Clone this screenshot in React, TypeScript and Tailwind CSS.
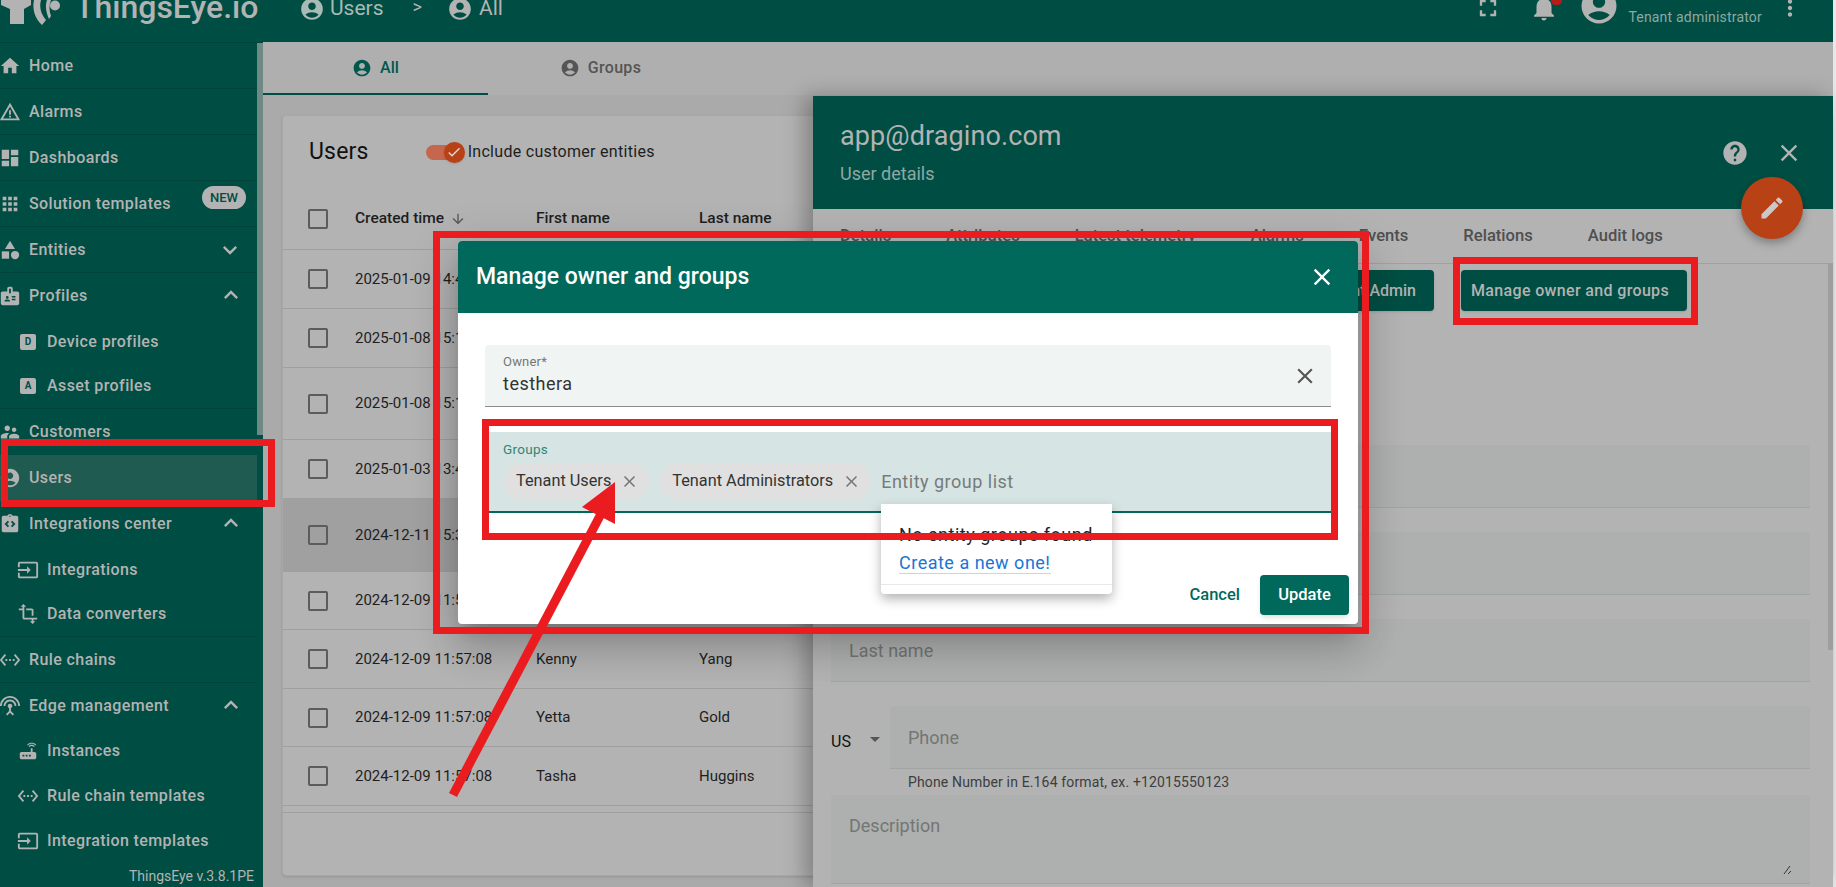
import React from "react";
import {
  MdHome, MdWarningAmber, MdDashboard, MdApps, MdCategory, MdBadge, MdSupervisorAccount, MdAccountCircle,
  MdIntegrationInstructions, MdInput, MdTransform, MdSettingsEthernet, MdSettingsInputAntenna, MdRouter,
  MdKeyboardArrowDown, MdKeyboardArrowUp, MdFullscreen, MdNotifications, MdMoreVert, MdHelp, MdClose, MdEdit,
  MdArrowDownward, MdCheck, MdArrowDropDown,
} from "react-icons/md";

type NavItem = {
  label: string;
  icon?: React.ComponentType<{ size?: number; className?: string }>;
  letter?: string;
  sub?: boolean;
  chevron?: "up" | "down";
  line?: boolean;
  active?: boolean;
  badge?: boolean;
  tight?: boolean;
};

const nav: NavItem[] = [
  { label: "Home", icon: MdHome, line: true },
  { label: "Alarms", icon: MdWarningAmber, line: true },
  { label: "Dashboards", icon: MdDashboard, line: true },
  { label: "Solution templates", icon: MdApps, line: true, badge: true },
  { label: "Entities", icon: MdCategory, line: true, chevron: "down" },
  { label: "Profiles", icon: MdBadge, chevron: "up" },
  { label: "Device profiles", letter: "D", sub: true },
  { label: "Asset profiles", letter: "A", sub: true, line: true },
  { label: "Customers", icon: MdSupervisorAccount },
  { label: "Users", icon: MdAccountCircle, active: true },
  { label: "Integrations center", icon: MdIntegrationInstructions, chevron: "up" },
  { label: "Integrations", icon: MdInput, sub: true },
  { label: "Data converters", icon: MdTransform, sub: true, line: true },
  { label: "Rule chains", icon: MdSettingsEthernet, line: true },
  { label: "Edge management", icon: MdSettingsInputAntenna, chevron: "up", tight: true },
  { label: "Instances", icon: MdRouter, sub: true },
  { label: "Rule chain templates", icon: MdSettingsEthernet, sub: true },
  { label: "Integration templates", icon: MdInput, sub: true },
];

const rows = [
  { h: "h-[59px]", date: "2025-01-09 14:45:10" },
  { h: "h-[59px]", date: "2025-01-08 15:12:33" },
  { h: "h-[72px]", date: "2025-01-08 15:10:21" },
  { h: "h-[59px]", date: "2025-01-03 13:41:52" },
  { h: "h-[73px]", date: "2024-12-11 15:30:44", selected: true },
  { h: "h-[58px]", date: "2024-12-09 11:57:08" },
  { h: "h-[59px]", date: "2024-12-09 11:57:08", first: "Kenny", last: "Yang" },
  { h: "h-[58px]", date: "2024-12-09 11:57:08", first: "Yetta", last: "Gold" },
  { h: "h-[59px]", date: "2024-12-09 11:57:08", first: "Tasha", last: "Huggins" },
];

function SideRow({ item }: { item: NavItem }) {
  const Icon = item.icon;
  return (
    <div
      className={`relative flex items-center shrink-0 ${item.sub ? "h-[45px] pl-[18px]" : item.tight ? "h-[45px]" : "h-[46px]"} ${item.line ? "border-b border-[#004238]" : ""} ${item.active ? "bg-[#1f5b51]" : ""}`}
    >
      <div className="w-[20px] flex justify-center shrink-0 mr-[9px]">
        {Icon ? (
          <Icon size={22} className="shrink-0 text-[#b3b3b3]" />
        ) : (
          <div className="w-[16px] h-[16px] rounded-[2px] bg-[#b3b3b3] flex items-center justify-center text-[10px] font-bold leading-none text-[#004e43]">
            {item.letter}
          </div>
        )}
      </div>
      <span className="text-[16px] font-medium tracking-[0.4px] text-[#b3b3b3] whitespace-nowrap">{item.label}</span>
      {item.badge && (
        <span className="absolute left-[202px] top-[5px] h-[23px] w-[44px] rounded-full bg-[#b3b3b3] text-[#004e43] text-[13px] font-medium flex items-center justify-center">
          NEW
        </span>
      )}
      {item.chevron === "down" && <MdKeyboardArrowDown size={28} className="absolute left-[216px] text-[#b3b3b3]" />}
      {item.chevron === "up" && <MdKeyboardArrowUp size={28} className="absolute left-[217px] -mt-[2px] text-[#b3b3b3]" />}
    </div>
  );
}

function Sidebar() {
  return (
    <aside className="w-[263px] shrink-0 h-full bg-[#004e43] flex flex-col relative">
      <div className="h-[43px] shrink-0 border-b border-[#004238] overflow-hidden flex items-start">
        <svg width="62" height="27" viewBox="0 0 62 27" className="shrink-0 ml-[1px]">
          <path d="M0 0H30V5L23 9V24H9V9L0 5Z" fill="#b3b3b3" />
          <path d="M33 0C31 9 34 19 41 25L45 20C40 14 38 7 40 0Z" fill="#b3b3b3" />
          <path d="M46 0C44 6 45 12 48 19L50 16C48 11 48 5 50 0Z" fill="#b3b3b3" />
          <circle cx="54" cy="5.5" r="5" fill="#b3b3b3" />
        </svg>
        <span className="ml-[12px] -mt-[12px] text-[32px] leading-[38px] font-medium text-[#b3b3b3] whitespace-nowrap">ThingsEye.io</span>
      </div>
      <div className="flex flex-1 min-h-0">
        <div className="w-[257px] flex flex-col shrink-0">
          {nav.map((n) => (
            <SideRow key={n.label} item={n} />
          ))}
          <div className="mt-[3px] pr-[3px] text-right text-[14px] text-[#b3b3b3]">ThingsEye v.3.8.1PE</div>
        </div>
        <div className="w-[6px] h-[392px] bg-[#6f8a84]" />
      </div>
    </aside>
  );
}

function TopBar() {
  return (
    <header className="h-[42px] shrink-0 bg-[#004e43] overflow-hidden">
      <div className="h-[17px] flex items-center text-[#b3b3b3]">
        <MdAccountCircle size={26} className="ml-[36px] shrink-0 text-[#a8bbb7]" />
        <span className="ml-[5px] text-[21px] text-[#a8bbb7]">Users</span>
        <span className="ml-[29px] -mt-[4px] text-[18px]">&gt;</span>
        <MdAccountCircle size={26} className="ml-[25px] shrink-0" />
        <span className="ml-[6px] text-[21px]">All</span>
        <MdFullscreen size={28} className="ml-auto shrink-0 -translate-y-[1px]" />
        <div className="relative ml-[27px] shrink-0 -translate-y-[1px]">
          <MdNotifications size={30} />
          <div className="absolute top-[3px] left-[22px] w-[11px] h-[9px] rounded-full bg-[#b71c1c]" />
        </div>
        <MdAccountCircle size={42} className="ml-[19px] shrink-0 -translate-y-[3px]" />
        <span className="ml-[8px] translate-y-[9px] text-[14px] tracking-[0.2px] text-[#8fa8a3] whitespace-nowrap">Tenant administrator</span>
        <MdMoreVert size={26} className="ml-[15px] mr-[30px] shrink-0 -translate-y-[1px]" />
      </div>
    </header>
  );
}

function TabsBar() {
  return (
    <div className="h-[53px] shrink-0 bg-[#afafaf] flex">
      <div className="w-[225px] border-b-[2px] border-[#004e43] flex items-center justify-center gap-[8px] text-[#00584d] text-[16px] font-medium pt-[1px]">
        <MdAccountCircle size={20} />
        <span>All</span>
      </div>
      <div className="w-[225px] flex items-center justify-center gap-[8px] text-[#555] text-[16px] font-medium tracking-[0.3px] pb-[1px]">
        <MdAccountCircle size={20} />
        <span>Groups</span>
      </div>
    </div>
  );
}

function Check() {
  return <div className="w-[20px] h-[20px] shrink-0 border-2 border-[#5c5c5c] rounded-[2px]" />;
}

function UsersCard() {
  return (
    <section className="ml-[19px] mt-[20px] h-[761px] bg-[#b3b3b3] rounded-[4px] border border-[#a8a8a8] flex flex-col text-[#1e1e1e] shadow-sm">
      <div className="h-[72px] shrink-0 flex items-center pl-[26px]">
        <h1 className="text-[23px] tracking-[0.2px] text-[#111]">Users</h1>
        <div className="relative ml-[57px] w-[32px] h-[15px] rounded-full bg-[#c4674d] shrink-0">
          <div className="absolute -right-[7px] -top-[3px] w-[21px] h-[21px] rounded-full bg-[#b84115] flex items-center justify-center text-[#dcdcdc] shadow">
            <MdCheck size={16} />
          </div>
        </div>
        <span className="ml-[10px] text-[16px] tracking-[0.3px]">Include customer entities</span>
      </div>
      <div className="h-[62px] shrink-0 flex items-center pl-[25px] pt-[1px] border-b border-[#9f9f9f] text-[15.5px] font-medium">
        <Check />
        <span className="ml-[27px] w-[181px] flex items-center gap-[6px] whitespace-nowrap">
          Created time <MdArrowDownward size={16} className="text-[#555]" />
        </span>
        <span className="w-[163px]">First name</span>
        <span>Last name</span>
      </div>
      {rows.map((r, i) => (
        <div key={i} className={`${r.h} shrink-0 flex items-center pl-[25px] border-b border-[#9f9f9f] text-[15px] ${r.selected ? "bg-[#a0a0a0]" : ""}`}>
          <Check />
          <span className="ml-[27px] w-[181px] whitespace-nowrap">{r.date}</span>
          <span className="w-[163px]">{r.first}</span>
          <span>{r.last}</span>
        </div>
      ))}
      <div className="h-[7px] shrink-0 border-b border-[#9f9f9f]" />
    </section>
  );
}

function DrawerField({ label, h = "h-[63px]", className = "" }: { label: string; h?: string; className?: string }) {
  return (
    <div className={`${h} bg-[#aeb0af] rounded-t-[4px] border-b border-[#a0a5a3] px-[18px] pt-[19px] text-[18px] leading-[26px] text-[#737673] ${className}`}>
      {label}
    </div>
  );
}

function Drawer() {
  return (
    <aside className="absolute left-[813px] top-[96px] w-[1020px] h-[791px] bg-[#b3b3b3] flex flex-col shadow-[-8px_0_20px_rgba(0,0,0,0.28)]">
      <div className="h-[113px] shrink-0 bg-[#004e43] pl-[27px] pt-[22px] flex justify-between text-[#b3b3b3]">
        <div>
          <div className="text-[27px] leading-[36px] tracking-[0.1px]">app@dragino.com</div>
          <div className="mt-[8px] text-[18px] leading-[24px] text-[#8fa8a3]">User details</div>
        </div>
        <div className="flex items-center gap-[26px] h-[70px] pr-[30px]">
          <MdHelp size={28} />
          <MdClose size={28} />
        </div>
      </div>
      <div className="absolute left-[928px] top-[81px] w-[62px] h-[62px] rounded-full bg-[#b84115] flex items-center justify-center text-[#c9c9c9] shadow-[0_4px_10px_rgba(0,0,0,0.3)]">
        <MdEdit size={28} />
      </div>
      <nav className="h-[55px] shrink-0 border-b border-[#a1a1a1] flex items-center pl-[27px] gap-[55px] text-[16.6px] font-medium text-[#4f4f4f] whitespace-nowrap">
        <span>Details</span>
        <span>Attributes</span>
        <span>Latest telemetry</span>
        <span>Alarms</span>
        <span>Events</span>
        <span>Relations</span>
        <span>Audit logs</span>
      </nav>
      <div className="absolute right-0 top-[167px] w-[5px] h-[387px] bg-[#9e9e9e]" />
      <div className="pt-[6px] flex pl-[387px] gap-[27px]">
        <button className="w-[234px] h-[41px] bg-[#004e43] rounded-[4px] text-[#b3b3b3] text-[16px] font-medium pr-[18px] text-right whitespace-nowrap shadow">
          Login as Tenant Admin
        </button>
        <button className="w-[226px] h-[41px] bg-[#004e43] rounded-[4px] text-[#b3b3b3] text-[16px] font-medium tracking-[0.35px] pr-[8px] whitespace-nowrap shadow">
          Manage owner and groups
        </button>
      </div>
      <div className="flex flex-col pl-[18px] pr-[23px] mt-[134px] gap-[24px]">
        <DrawerField label="Email*" />
        <DrawerField label="First name" />
        <DrawerField label="Last name" />
        <div className="flex items-start">
          <div className="w-[59px] h-[63px] flex items-center pt-[8px] text-[16px] text-[#111] shrink-0">
            <span>US</span>
            <MdArrowDropDown size={24} className="ml-[12px] -mt-[6px] text-[#555]" />
          </div>
          <div className="flex-1">
            <DrawerField label="Phone" />
            <div className="pl-[18px] mt-[5px] text-[14px] leading-[16px] tracking-[0.15px] text-[#3d3d3d]">Phone Number in E.164 format, ex. +12015550123</div>
          </div>
        </div>
      </div>
      <div className="pl-[18px] pr-[23px] mt-[5px]">
        <div className="relative h-[89px] bg-[#aeb0af] rounded-t-[4px] border-b border-[#a0a5a3] px-[18px] pt-[18px] text-[18px] leading-[26px] text-[#737673]">
          Description
          <svg width="10" height="10" viewBox="0 0 10 10" className="absolute right-[18px] bottom-[8px]">
            <path d="M8 1L2 9M9 6L6 9" stroke="#333" strokeWidth="1" fill="none" />
          </svg>
        </div>
      </div>
    </aside>
  );
}

function Chip({ text }: { text: string }) {
  return (
    <div className="h-[37px] rounded-full bg-[#e0e0e0] pl-[13px] pr-[10px] flex items-center gap-[9px] text-[16.3px] text-[#333] whitespace-nowrap">
      <span>{text}</span>
      <MdClose size={19} className="text-[#777]" />
    </div>
  );
}

function Dialog() {
  return (
    <div className="absolute left-[458px] top-[241px] w-[900px] h-[383px] bg-white rounded-[4px] flex flex-col shadow-[0_11px_15px_-7px_rgba(0,0,0,0.2),0_24px_38px_3px_rgba(0,0,0,0.14),0_9px_46px_8px_rgba(0,0,0,0.12)]">
      <div className="h-[72px] shrink-0 bg-[#00695c] rounded-t-[4px] pl-[18px] pr-[22px] flex items-center justify-between text-white">
        <h2 className="text-[23px] font-medium">Manage owner and groups</h2>
        <MdClose size={28} />
      </div>
      <div className="mx-[27px] mt-[32px] h-[62px] shrink-0 bg-[#f0f5f4] rounded-t-[4px] border-b border-[#8a8a8a] pl-[18px] pr-[13px] flex items-center justify-between">
        <div className="-mt-[2px]">
          <div className="text-[13px] leading-[17px] tracking-[0.2px] text-[#757575]">Owner*</div>
          <div className="mt-[1px] text-[18px] leading-[25px] tracking-[0.5px] text-[#333]">testhera</div>
        </div>
        <MdClose size={26} className="text-[#555]" />
      </div>
      <div className="mx-[27px] mt-[25px] h-[81px] shrink-0 bg-[#d6e5e3] border-b-[2px] border-[#00695c] pl-[18px] pt-[9px]">
        <div className="text-[13.5px] leading-[17px] tracking-[0.3px] text-[#2f8578]">Groups</div>
        <div className="mt-[5px] flex items-center gap-[10px]">
          <Chip text="Tenant Users" />
          <Chip text="Tenant Administrators" />
          <span className="text-[18px] tracking-[0.5px] text-[#767b7a]">Entity group list</span>
        </div>
      </div>
      <div className="absolute left-[423px] top-[263px] w-[231px] h-[90px] bg-white rounded-b-[4px] pl-[18px] pt-[19px] shadow-[0_5px_12px_rgba(0,0,0,0.3)]">
        <div className="text-[18px] leading-[24px] tracking-[0.5px] text-[#222] whitespace-nowrap">No entity groups found</div>
        <div className="text-[18px] leading-[22px] mt-[5px] text-[#1976d2] tracking-[0.5px] whitespace-nowrap">
          <span className="border-b border-[#c9d4ec]">Create a new one!</span>
        </div>
        <div className="absolute left-0 right-0 bottom-[9px] border-t border-[#e8e8e8]" />
      </div>
      <div className="mt-auto mb-[9px] pr-[9px] flex items-center justify-end gap-[20px]">
        <span className="text-[16.5px] font-medium text-[#00695c]">Cancel</span>
        <button className="w-[89px] h-[40px] rounded-[4px] bg-[#00695c] text-white text-[16.5px] font-medium shadow-md">Update</button>
      </div>
    </div>
  );
}

function Annotations() {
  const box = "absolute border-[7px] border-[#ea1c1f]";
  return (
    <>
      <div className={`${box} left-[1px] top-[439px] w-[274px] h-[68px]`} />
      <div className={`${box} left-[433px] top-[231px] w-[936px] h-[403px]`} />
      <div className={`${box} left-[482px] top-[419px] w-[856px] h-[121px]`} />
      <div className={`${box} left-[1453px] top-[257px] w-[245px] h-[68px]`} />
      <svg width="1836" height="887" className="absolute left-0 top-0 pointer-events-none">
        <line x1="453" y1="795" x2="602" y2="512" stroke="#ea1c1f" strokeWidth="9" />
        <polygon points="615,482 582,507 615,524" fill="#ea1c1f" />
      </svg>
    </>
  );
}

export default function App() {
  return (
    <div className="relative w-[1836px] h-[887px] overflow-hidden bg-[#e8e8e8] flex font-['Roboto',sans-serif]">
      <Sidebar />
      <main className="w-[1570px] shrink-0 h-full bg-[#aaaaaa] flex flex-col">
        <TopBar />
        <TabsBar />
        <UsersCard />
      </main>
      <Drawer />
      <Dialog />
      <Annotations />
    </div>
  );
}
